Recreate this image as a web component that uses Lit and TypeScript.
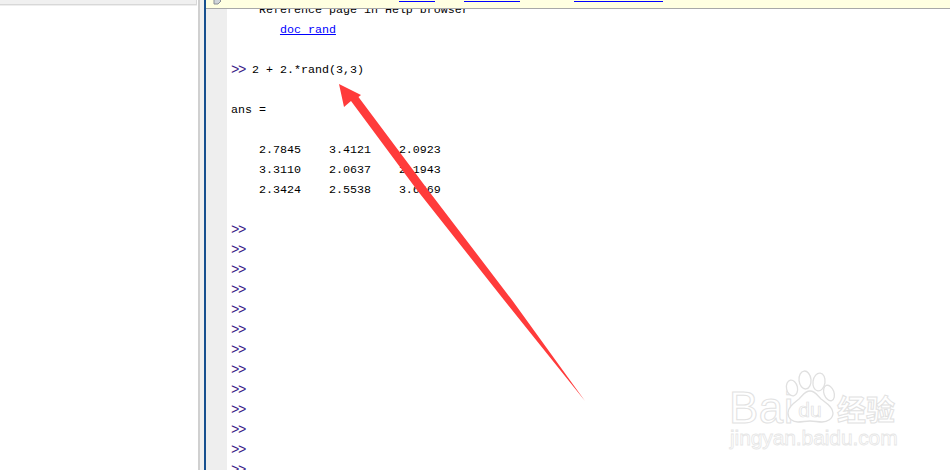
import { LitElement, html, css, svg } from "lit";
import { customElement } from "lit/decorators.js";

const prompts = Array.from({ length: 13 });

@customElement("app-root")
export class AppRoot extends LitElement {
  static styles = css`
    :host { display: block; width: 950px; height: 470px; overflow: hidden; position: relative; background: #fff; }
    .page { display: flex; height: 470px; overflow: hidden; }
    .left { width: 198px; flex: none; }
    .lefttop { height: 4px; margin-right: 1px; background: #f0f0f0; border-bottom: 1px solid #d8d8d8; border-right: 1px solid #d8d8d8; box-shadow: 0 1px 0 #eee; }
    .split { width: 6px; flex: none; background: #f0f0f0; border-left: 2px solid #d0d0d0; box-sizing: border-box; }
    .main { width: 746px; flex: none; border-left: 2px solid #17508f; display: flex; flex-direction: column; }
    .notice { height: 8px; flex: none; background: #ffffe1; border-bottom: 1px solid #a8a8a8; display: flex; position: relative; overflow: hidden; }
    .notice .ic { position: absolute; left: 7px; top: -5px; width: 10px; height: 10px; }
    .u { position: absolute; top: 1px; height: 1px; background: #0000ff; }
    .body { flex: 1; display: flex; min-height: 0; }
    .gutter { width: 21px; flex: none; background: #eeeeee; }
    pre { margin: -9px 0 0 4px; font: 11.67px/20px "Liberation Mono", monospace; color: #000; }
    a { color: #0000ff; text-decoration: underline; }
    .p { color: #3a2488; font-size: 14px; line-height: 14px; letter-spacing: -1.4px; vertical-align: -1px; }
    .arrow { position: absolute; left: 0; top: 0; width: 950px; height: 470px; pointer-events: none; }
    .mark { position: absolute; left: 728px; top: 366px; width: 175px; height: 100px; }
    .baidu { position: absolute; left: 1px; top: 20px; font: 400 44px/44px "Liberation Sans", sans-serif; color: #fff; -webkit-text-stroke: 1px #e2e2e2; letter-spacing: 0.5px; }
    .cn { position: absolute; left: 109px; top: 24px; font: 700 29px/36px "Noto Sans CJK SC", sans-serif; color: #fff; -webkit-text-stroke: 1px #e2e2e2; letter-spacing: 0; }
    .site { position: absolute; left: 2px; top: 59px; font: 400 21px/26px "Liberation Sans", sans-serif; color: #fff; -webkit-text-stroke: 0.8px #e6e6e6; letter-spacing: -0.1px; white-space: nowrap; }
    .paw { position: absolute; left: 57px; top: 0; width: 60px; height: 60px; }
  `;

  private pawSvg() {
    return svg`
      <g fill="#fff" stroke="#e0e0e0" stroke-width="1.3">
        <ellipse cx="7" cy="22" rx="5.5" ry="8" transform="rotate(-12 7 22)"/>
        <ellipse cx="20" cy="14" rx="6" ry="9" transform="rotate(-6 20 14)"/>
        <ellipse cx="34" cy="16" rx="6" ry="9" transform="rotate(8 34 16)"/>
        <ellipse cx="44" cy="27" rx="5" ry="8" transform="rotate(-20 44 27)"/>
        <path d="M25 25c5 0 7 4 11 8 5 4 12 8 12 14 0 6-6 9-11 9-4 0-8-1-12-1s-8 1-12 1c-5 0-10-3-10-9 0-6 6-10 11-14 4-4 6-8 11-8z"/>
      </g>
      <text x="25" y="51" text-anchor="middle" font-family="Liberation Sans" font-size="21" fill="#fff" stroke="#e0e0e0" stroke-width="0.7">du</text>`;
  }

  render() {
    return html`
      <div class="page">
        <div class="left"><div class="lefttop"></div></div>
        <div class="split"></div>
        <div class="main">
          <div class="notice">
            <svg class="ic" viewBox="0 0 10 10"><path d="M1 3h4l3 3-3 3H1z" fill="#cfd4da" stroke="#8a8f96" stroke-width="1"/></svg>
            <span class="u" style="left:193px;width:36px"></span>
            <span class="u" style="left:258px;width:56px"></span>
            <span class="u" style="left:368px;width:89px"></span>
          </div>
          <div class="body">
            <div class="gutter"></div>
            <pre>    Reference page in Help browser
       <a>doc rand</a>

<span class="p">&gt;&gt;</span> 2 + 2.*rand(3,3)

ans =

    2.7845    3.4121    2.0923
    3.3110    2.0637    2.1943
    2.3424    2.5538    3.6469

${prompts.map(() => html`<span class="p">&gt;&gt;</span>\n`)}</pre>
          </div>
        </div>
      </div>
      <svg class="arrow" viewBox="0 0 950 470">
        <path d="M339 84 L361 95 L358.5 97 L428 190 L512 300 L585 401 L504 300 L417 190 L351 101 L344 107 Z" fill="#ff3b3b"/>
      </svg>
      <div class="mark">
        <div class="baidu">Bai</div>
        <svg class="paw" viewBox="0 0 60 60">${this.pawSvg()}</svg>
        <div class="cn">经验</div>
        <div class="site">jingyan.baidu.com</div>
      </div>
    `;
  }
}
